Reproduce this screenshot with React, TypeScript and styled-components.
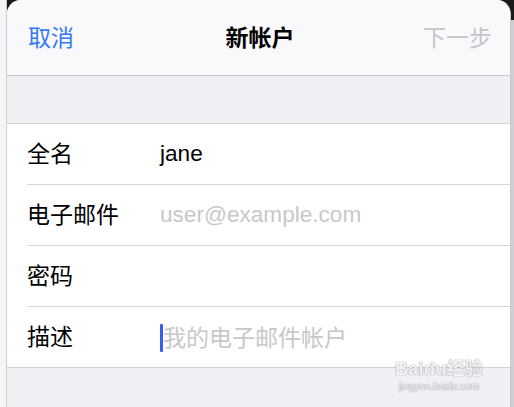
import React from "react";
import styled, { createGlobalStyle } from "styled-components";

const Global = createGlobalStyle`
  html, body { margin: 0; padding: 0; }
  body {
    width: 514px;
    height: 407px;
    overflow: hidden;
    background: #f4f4f6;
    font-family: "Noto Sans CJK SC", "Noto Sans", sans-serif;
  }
`;

const Frame = styled.div`
  position: relative;
  width: 514px;
  height: 407px;
  display: flex;
  background: linear-gradient(to bottom, #1a1a1a 0, #1a1a1a 20px, #cfcfd3 20px);
`;

const LeftStrip = styled.div`
  width: 6px;
  background: #f5f5f6;
  border-right: 1px solid #cfcfd3;
`;

const Sheet = styled.div`
  flex: 1;
  display: flex;
  flex-direction: column;
  background: #efeff4;
  border-radius: 14px 14px 0 0;
  overflow: hidden;
  margin-right: 3px;
  border-right: 1px solid #c8c8cc;
`;

const NavBar = styled.div`
  height: 76px;
  flex-shrink: 0;
  display: grid;
  grid-template-columns: 1fr auto 1fr;
  align-items: center;
  padding: 0 18px 0 21px;
  background: #f9f9fb;
  border-bottom: 1px solid #c8c7cc;
  box-sizing: border-box;
`;

const NavButton = styled.span<{ $align: "left" | "right"; $disabled?: boolean }>`
  font-size: 23px;
  color: ${(p) => (p.$disabled ? "#c5c5c8" : "#3478f6")};
  justify-self: ${(p) => (p.$align === "left" ? "start" : "end")};
  line-height: 1;
  margin-top: -3px;
`;

const Title = styled.span`
  font-size: 23px;
  font-weight: 700;
  color: #000;
  line-height: 1;
  margin-top: -3px;
`;

const Spacer = styled.div<{ $h: number }>`
  height: ${(p) => p.$h}px;
  flex-shrink: 0;
`;

const Group = styled.div`
  background: #fff;
  border-top: 1px solid #d3d3d6;
  border-bottom: 1px solid #d3d3d6;
  padding-left: 20px;
`;

const Row = styled.div<{ $last?: boolean }>`
  height: 60px;
  display: flex;
  align-items: center;
  border-bottom: ${(p) => (p.$last ? "none" : "1px solid #d6d6d9")};
`;

const Label = styled.span`
  width: 133px;
  font-size: 23px;
  color: #000;
  line-height: 1;
  flex-shrink: 0;
  margin-top: -3px;
`;

const Value = styled.span<{ $placeholder?: boolean }>`
  position: relative;
  font-family: "Liberation Sans", "Noto Sans CJK SC", sans-serif;
  font-size: 22.6px;
  color: ${(p) => (p.$placeholder ? "#c7c7cc" : "#000")};
  line-height: 1;
  display: flex;
  align-items: center;
`;

const CjkValue = styled(Value)`
  font-family: "Noto Sans CJK SC", sans-serif;
  font-size: 23px;
  margin-top: -2px;
`;

const Caret = styled.span`
  display: inline-block;
  width: 3px;
  height: 28px;
  background: #3b5ef0;
  border-radius: 1px;
  margin-top: 3px;
`;

const Watermark = styled.div`
  position: absolute;
  left: 395px;
  top: 352px;
  display: flex;
  flex-direction: column;
  align-items: center;
  color: rgba(255, 255, 255, 0.9);
  text-shadow: 0 0 1px rgba(150, 150, 160, 0.9), 0 0 1px rgba(150, 150, 160, 0.9);
  pointer-events: none;
`;

const WmTop = styled.div`
  font-family: "Liberation Sans", "Noto Sans CJK SC", sans-serif;
  font-weight: 700;
  font-size: 18px;
  letter-spacing: 0.3px;
  line-height: 1;
  padding-top: 8px;
`;

const WmSub = styled.div`
  font-family: "Liberation Sans", sans-serif;
  font-size: 10px;
  margin-top: 4px;
  line-height: 1;
`;

export default function App() {
  return (
    <>
      <Global />
      <Frame>
        <LeftStrip />
        <Sheet>
          <NavBar>
            <NavButton $align="left">取消</NavButton>
            <Title>新帐户</Title>
            <NavButton $align="right" $disabled>
              下一步
            </NavButton>
          </NavBar>
          <Spacer $h={47} />
          <Group>
            <Row>
              <Label>全名</Label>
              <Value>jane</Value>
            </Row>
            <Row>
              <Label>电子邮件</Label>
              <Value $placeholder>user@example.com</Value>
            </Row>
            <Row>
              <Label>密码</Label>
            </Row>
            <Row $last>
              <Label>描述</Label>
              <CjkValue $placeholder>
                <Caret />
                我的电子邮件帐户
              </CjkValue>
            </Row>
          </Group>
        </Sheet>
        <Watermark>
          <WmTop>Baidu经验</WmTop>
          <WmSub>jingyan.baidu.com</WmSub>
        </Watermark>
      </Frame>
    </>
  );
}
